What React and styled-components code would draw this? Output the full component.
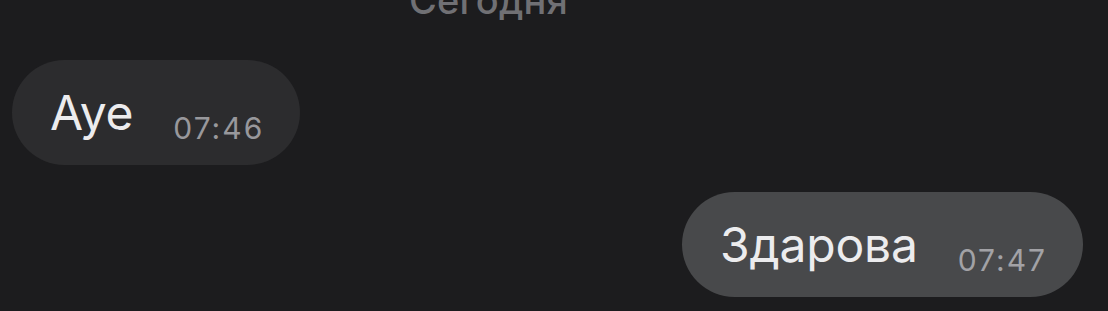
import React from "react";
import styled, { createGlobalStyle } from "styled-components";

const Global = createGlobalStyle`
  html, body { margin: 0; padding: 0; background: #1c1c1e; }
  body { font-family: Inter, "Noto Sans", "Liberation Sans", sans-serif; -webkit-font-smoothing: antialiased; }
`;

const Chat = styled.div`
  width: 1108px;
  height: 311px;
  overflow: hidden;
  background: #1c1c1e;
  display: flex;
  flex-direction: column;
  padding: 0 25px 0 12px;
  box-sizing: border-box;
`;

const DateLabel = styled.div`
  margin-top: -19px;
  align-self: flex-start;
  margin-left: 397px;
  font-size: 38px;
  line-height: 38px;
  color: #707074;
  font-weight: 500;
  letter-spacing: 0.2px;
`;

const Row = styled.div`
  display: flex;
  justify-content: ${(p) => (p.$out ? "flex-end" : "flex-start")};
  margin-top: ${(p) => p.$gap}px;
`;

const Bubble = styled.div`
  display: flex;
  align-items: center;
  height: 105px;
  box-sizing: border-box;
  padding: 0 38px 0 38px;
  border-radius: 53px;
  background: ${(p) => (p.$out ? "#48494b" : "#2c2c2e")};
`;

const Text = styled.span`
  font-size: 48px;
  line-height: 48px;
  color: #ececee;
  letter-spacing: -0.2px;
`;

const Time = styled.span`
  margin-left: 40px;
  margin-top: 30px;
  font-size: 30px;
  line-height: 30px;
  letter-spacing: 2px;
  margin-right: -2px;
  color: ${(p) => (p.$out ? "#a2a2a6" : "#98989c")};
`;

const messages = [
  { text: "Aye", time: "07:46", out: false, gap: 41 },
  { text: "Здарова", time: "07:47", out: true, gap: 27 },
];

export default function App() {
  return (
    <>
      <Global />
      <Chat>
        <DateLabel>Сегодня</DateLabel>
        {messages.map((m) => (
          <Row key={m.time} $out={m.out} $gap={m.gap}>
            <Bubble $out={m.out}>
              <Text>{m.text}</Text>
              <Time $out={m.out}>{m.time}</Time>
            </Bubble>
          </Row>
        ))}
      </Chat>
    </>
  );
}
